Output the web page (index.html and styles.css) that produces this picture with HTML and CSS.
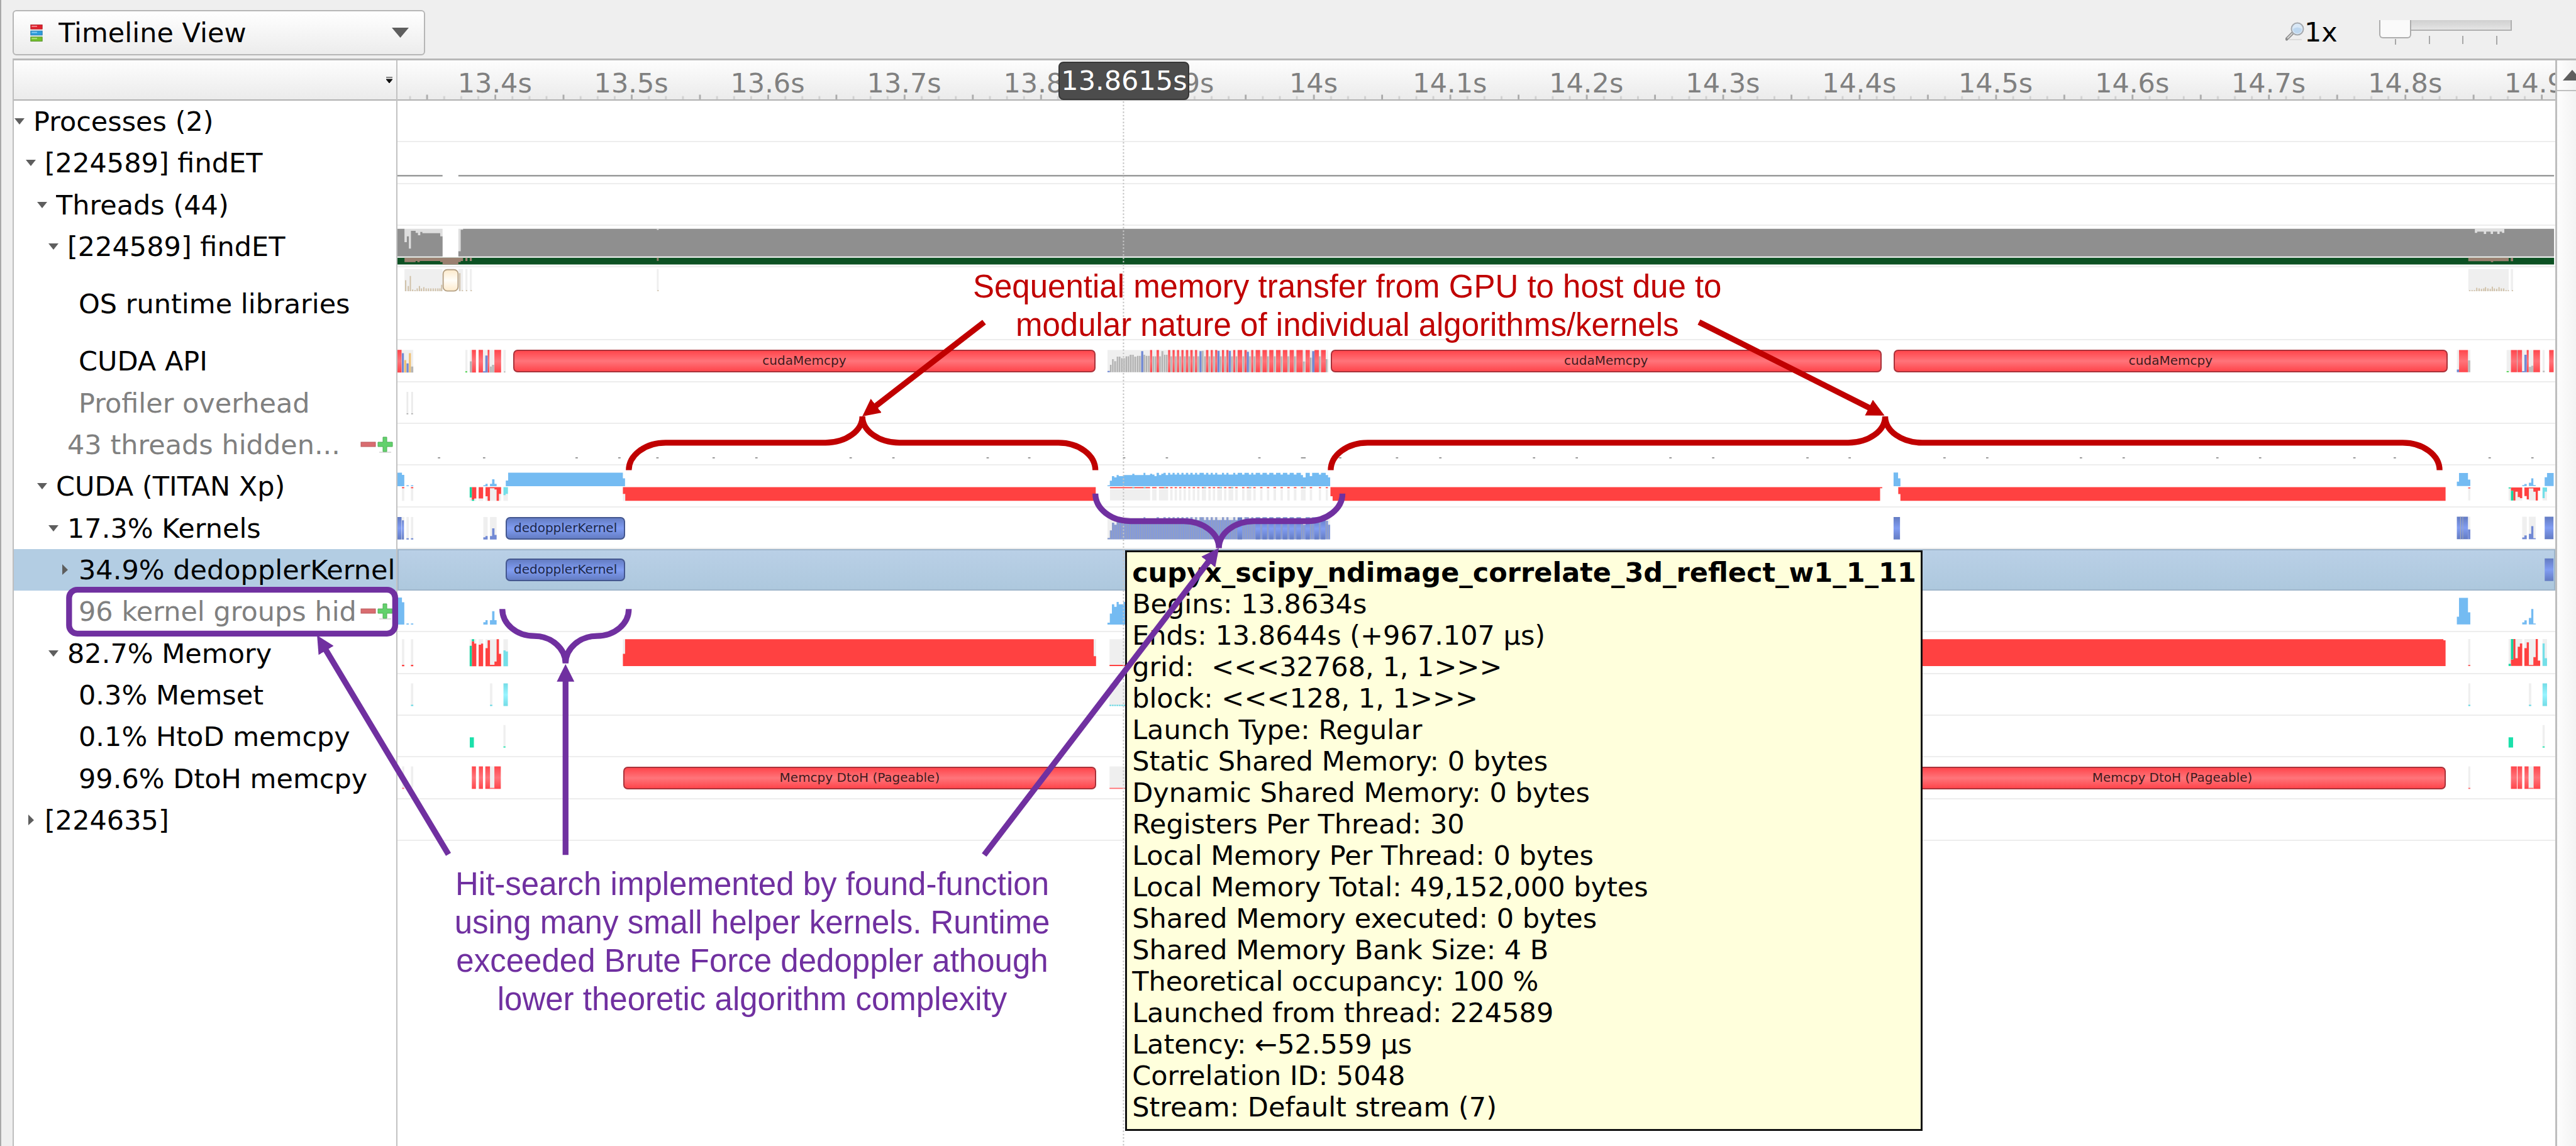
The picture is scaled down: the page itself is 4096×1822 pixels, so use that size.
FILE: index.html
```html
<!DOCTYPE html>
<html lang="en">
<head>
<meta charset="utf-8">
<title>Timeline View</title>
<link rel="stylesheet" href="styles.css">
</head>
<body>
<svg class="defs" width="0" height="0" aria-hidden="true">
  <defs>
    <symbol id="open" viewBox="0 0 16 10"><path d="M0 0H16L8 10z" fill="#5e5e5e"/></symbol>
    <symbol id="closed" viewBox="0 0 9 17"><path d="M0 0L9 9L0 17z" fill="#5e5e5e"/></symbol>
    <symbol id="minus" viewBox="0 0 25 26"><rect x="1" y="9" width="23" height="7" fill="#d96d70" stroke="#b9585b"/></symbol>
    <symbol id="plus" viewBox="0 0 25 26"><path d="M3 25H22" stroke="#dcdcdc" stroke-width="2"/><path d="M9 1H15V9H24V16H15V24H9V16H1V9H9z" fill="#62d16c" stroke="#4cae55"/></symbol>
    <linearGradient id="red" x2="0" y2="1"><stop offset="0" stop-color="#ff464c"/><stop offset=".5" stop-color="#ff747a"/><stop offset="1" stop-color="#ff464c"/></linearGradient>
    <linearGradient id="indigo" x2="0" y2="1"><stop offset="0" stop-color="#637bc2"/><stop offset=".5" stop-color="#819df2"/><stop offset="1" stop-color="#637bc2"/></linearGradient>
    <linearGradient id="cyan" x2="0" y2="1"><stop offset="0" stop-color="#74dce6"/><stop offset=".5" stop-color="#98f4ff"/><stop offset="1" stop-color="#74dce6"/></linearGradient>
    <linearGradient id="cream" x2="0" y2="1"><stop offset="0" stop-color="#fdeacb"/><stop offset=".5" stop-color="#fffdf8"/><stop offset="1" stop-color="#fdeacb"/></linearGradient>
    <pattern id="graybars" width="8.6" height="10" patternUnits="userSpaceOnUse"><rect width="9" height="10" fill="#d6d6d6"/><rect width="4" height="10" fill="#ababab"/></pattern>
    <pattern id="bluebars" width="8.6" height="10" patternUnits="userSpaceOnUse"><rect width="9" height="10" fill="#8299de"/><rect width="3" height="10" fill="#98a2b8"/></pattern>
    <pattern id="ticks" x="699" y="160" width="116.5" height="20" patternUnits="userSpaceOnUse"><path d="M1.500 6V12M59.800 6V12M88.900 6V12" stroke="#cfcfcf" stroke-width="3"/><path d="M30.600 3.500V12" stroke="#a8a8a8" stroke-width="3"/></pattern>
    <path id="burst" d="M317 100V93H326V59H334V25H343V34H352V16H360V25H378V16H412V7H420V16H455V0H462V16H480V7H488V13H497V25H505V0H514V16H523V7H531V0H540V16H549V0H557V13H566V0H574V13H583V0H591V13H600V0H608V13H617V0H626V13H634V0H643V13H652V0H660V13H669V0H686V13H694V0H703V13H712V0H720V13H729V0H737V13H755V0H763V13H772V0H780V13H798V0H806V13H815V0H832V13H841V0H858V13H867V0H875V13H884V0H901V13H910V0H927V13H936V0H952V13H962V0H979V13H988V0H1005V13H1014V0H1030V13H1040V0H1057V16H1065V34H1075V0H1091V25H1100V0H1126V13H1134V0H1152V16H1161V34H1169V100Z"/>
    <clipPath id="copies"><path d="M326 930H480V1010H326zM488 930H505V1010H488zM514 930H549V1010H514zM557 930H566V1010H557zM574 930H583V1010H574zM591 930H600V1010H591zM608 930H617V1010H608zM626 930H634V1010H626zM643 930H652V1010H643zM660 930H669V1010H660zM678 930H694V1010H678zM703 930H712V1010H703zM720 930H729V1010H720zM737 930H755V1010H737zM763 930H772V1010H763zM780 930H798V1010H780zM806 930H815V1010H806zM832 930H841V1010H832zM850 930H867V1010H850zM875 930H884V1010H875zM901 930H910V1010H901zM927 930H936V1010H927zM952 930H962V1010H952zM979 930H988V1010H979zM1005 930H1014V1010H1005zM1030 930H1040V1010H1030zM1057 930H1075V1010H1057zM1091 930H1100V1010H1091zM1126 930H1134V1010H1126zM1152 930H1161V1010H1152z"/></clipPath>
    <marker id="head-red" markerUnits="userSpaceOnUse" markerWidth="30" markerHeight="30" refX="2" refY="15" orient="auto"><path d="M0 0L30 15L0 30z" fill="#c00000"/></marker>
    <marker id="head-purple" markerUnits="userSpaceOnUse" markerWidth="30" markerHeight="30" refX="2" refY="15" orient="auto"><path d="M0 0L30 15L0 30z" fill="#7030a0"/></marker>
  </defs>
</svg>

<header class="toolbar">
  <div class="picker">
    <svg class="picker-icon" viewBox="0 0 20 28" aria-hidden="true">
      <rect x=".5" y=".5" width="19" height="7" fill="#e0202c" stroke="#b3252c"/><rect x="2" y="2" width="9" height="2" fill="#f38a90"/>
      <rect x=".5" y="10.500" width="19" height="7" fill="#2d9ddc" stroke="#2778ae"/><rect x="2" y="12" width="9" height="2" fill="#8accf2"/>
      <rect x=".5" y="20.500" width="19" height="7" fill="#74bf2c" stroke="#55912a"/><rect x="2" y="22" width="9" height="2" fill="#b2e27a"/>
    </svg>
    <select aria-label="View"><option>Timeline View</option></select>
    <svg class="picker-arrow" viewBox="0 0 16 10" preserveAspectRatio="none" aria-hidden="true"><path d="M0 0H16L8 10z" fill="#5e5e5e"/></svg>
  </div>
  <div class="zoom">
    <svg class="lens" viewBox="0 0 30 30" aria-hidden="true">
      <path d="M6 28H26" stroke="#dcdcdc" stroke-width="2"/>
      <path d="M2 27L11 18" stroke="#8c8c8c" stroke-width="5" stroke-linecap="round"/><path d="M3 26L11 18" stroke="#d6d6d6" stroke-width="2"/>
      <circle cx="19" cy="11" r="9.500" fill="#d9e8f6" stroke="#a5a9ae" stroke-width="2"/><path d="M12 11Q19 6 26 11A7 7 0 0 1 12 11" fill="#bdd7ef"/>
    </svg>
    <label for="zoom">1x</label>
    <div class="slider">
      <input id="zoom" type="range" min="1" max="10" value="1">
      <svg class="slider-ticks" viewBox="0 0 211 40" aria-hidden="true"><path d="M26 30V39M80 25V38M133 25V38M187 25V39" stroke="#a8a8a8" stroke-width="2"/></svg>
    </div>
  </div>
</header>

<main class="workspace">
  <section class="tree">
    <div class="tree-head"><button aria-label="Columns"><svg width="10" height="10" viewBox="0 0 10 10"><path d="M0 1H10M0 4L5 10L10 4z" fill="#111" stroke="#111"/></svg></button></div>
    <ul class="rows">
      <li class="l0"><button class="twisty" aria-label="Collapse"><svg class="open"><use href="#open"/></svg></button><span>Processes (2)</span></li>
      <li class="l1"><button class="twisty" aria-label="Collapse"><svg class="open"><use href="#open"/></svg></button><span>[224589] findET</span></li>
      <li class="l2"><button class="twisty" aria-label="Collapse"><svg class="open"><use href="#open"/></svg></button><span>Threads (44)</span></li>
      <li class="l3"><button class="twisty" aria-label="Collapse"><svg class="open"><use href="#open"/></svg></button><span>[224589] findET</span></li>
      <li class="l4"><i class="twisty"></i><span>OS runtime libraries</span></li>
      <li class="l4"><i class="twisty"></i><span>CUDA API</span></li>
      <li class="l4 muted"><i class="twisty"></i><span>Profiler overhead</span></li>
      <li class="l3 muted"><i class="twisty"></i><span>43 threads hidden...</span><button class="step" aria-label="Fewer"><svg><use href="#minus"/></svg></button><button class="step" aria-label="More"><svg><use href="#plus"/></svg></button></li>
      <li class="l2"><button class="twisty" aria-label="Collapse"><svg class="open"><use href="#open"/></svg></button><span>CUDA (TITAN Xp)</span></li>
      <li class="l3"><button class="twisty" aria-label="Collapse"><svg class="open"><use href="#open"/></svg></button><span>17.3% Kernels</span></li>
      <li class="l4 selected"><button class="twisty" aria-label="Expand"><svg class="closed"><use href="#closed"/></svg></button><span>34.9% dedopplerKernel</span></li>
      <li class="l4 muted"><i class="twisty"></i><span>96 kernel groups hid</span><button class="step" aria-label="Fewer"><svg><use href="#minus"/></svg></button><button class="step" aria-label="More"><svg><use href="#plus"/></svg></button></li>
      <li class="l3"><button class="twisty" aria-label="Collapse"><svg class="open"><use href="#open"/></svg></button><span>82.7% Memory</span></li>
      <li class="l4"><i class="twisty"></i><span>0.3% Memset</span></li>
      <li class="l4"><i class="twisty"></i><span>0.1% HtoD memcpy</span></li>
      <li class="l4"><i class="twisty"></i><span>99.6% DtoH memcpy</span></li>
      <li class="l1"><button class="twisty" aria-label="Expand"><svg class="closed"><use href="#closed"/></svg></button><span>[224635]</span></li>
    </ul>
  </section>

  <section class="timeline">
    <div class="ruler">
      <svg class="chart" viewBox="679 101 3685 71" preserveAspectRatio="none"><rect x="679" y="160" width="3685" height="12" fill="url(#ticks)"/></svg>
      <span style="left:4.600%">13.4s</span><span style="left:10.920%">13.5s</span><span style="left:17.240%">13.6s</span><span style="left:23.570%">13.7s</span><span style="left:29.890%">13.8s</span><span style="left:36.210%">13.9s</span><span style="left:42.540%">14s</span><span style="left:48.860%">14.1s</span><span style="left:55.180%">14.2s</span><span style="left:61.510%">14.3s</span><span style="left:67.830%">14.4s</span><span style="left:74.150%">14.5s</span><span style="left:80.480%">14.6s</span><span style="left:86.800%">14.7s</span><span style="left:93.130%">14.8s</span><span style="left:99.450%">14.9s</span>
    </div>
    <div class="rows">
      <div class="lane"></div>
      <div class="lane"><svg class="chart" viewBox="679 243.700 3685 71.300" preserveAspectRatio="none"><path d="M679 301H756M783 301H4362" stroke="#8f9090" stroke-width="2.500"/></svg></div>
      <div class="lane"></div>
      <div class="lane"><svg class="chart" viewBox="679 386 3685 71.300" preserveAspectRatio="none">
        <path d="M691 391H756V438H691zM783 391H791V438H783z" fill="#dedede"/>
        <path d="M679 391H691V414H695V404H698.500V425H702V394.500H710V398H714V402H718V396.500H721.500V398.500H752V404H756V438.500H679zM783 429.500H787V392.700H791V391H4362V438.500H783z" fill="#8f8f8f"/>
        <path d="M4226.700 391V398H4230.700V396H4242V400H4246V396H4253.700V400H4257.700V396H4265V400H4269V396H4273V398H4277V391zM1122 391H1125V393H1122z" fill="#dedede"/>
        <path d="M679 440.700H4362V452.200H679z" fill="#0c5123"/>
        <path d="M691 440.700H791V446.300H787V448H783V452.200H756V448H752V446.300H717V448H713V446.300H710V448H691zM795 440.700H798.500V446.300H795zM802.500 440.700H806V446.300H802.500zM1122 440.700H1125V446H1122zM4215.500 440.700H4284.500V446.500H4258V448H4254V446.500H4215.500zM4288 440.700H4292V446.500H4288z" fill="#9a8070"/>
      </svg></div>
      <div class="lane"><svg class="chart" viewBox="679 457 3685 125" preserveAspectRatio="none">
        <path d="M691 460H756V498H691zM783 460H791V498H783zM795 460H798.500V498H795zM802.500 460H806V498H802.500zM1122 460H1125V498H1122zM4215.500 460H4284.500V498H4215.500zM4288 460H4292V498H4288z" fill="#efefef"/>
        <path d="M693 498V479M697.500 498V489M701 498V471.700M705 498V495M709 498V496M712.700 498V493M716.500 498V489M720 498V493M724 498V491M728 498V493M732 498V493M736 498V493M740 498V493M744 498V493M748 498V493M751.500 498V493M754.500 498V487M785.500 498V467M790 498V496M797 498V496M805 498V496M1124 498V496M4218 498V496M4222 498V496M4226 498V496M4230 498V492M4234 498V493M4238 498V494M4242 498V493M4245 498V491M4249 498V493M4253 498V494M4256.500 498V490M4260 498V493M4264 498V494M4268 498V491M4272 498V493M4276 498V493M4280 498V496M4284 498V496M4291 498V496" stroke="#cfbfa5" stroke-width="2" fill="none"/>
        <rect x="757" y="461" width="25.500" height="36.500" rx="7" fill="url(#cream)" stroke="#b5a185" stroke-width="2"/>
      </svg></div>
      <div class="lane"><svg class="chart" viewBox="679 582 3685 71.300" preserveAspectRatio="none">
        <path d="M679 598.500H706V637H679zM795 598.500H798.500V637H795zM802.500 598.500H806V637H802.500zM825 598.500H844V637H825zM860 598.500H864V637H860z" fill="#efefef"/>
        <path d="M679 598.500H686V637H679zM806 598.500H813V637H806zM817.500 598.500H825V637H817.500zM833 598.500H836V637H833zM844.500 598.500H856V637H844.500z" fill="url(#red)"/>
        <path d="M686.500 604H690V637H686.500zM694.500 621.500H698V637H694.500zM829 608H833V637H829zM825 635H829V637H825z" fill="#7189d4"/>
        <path d="M690.500 616H694V637H690.500zM698.500 604H702V637H698.500z" fill="#f0c173"/>
        <path d="M702 627H706V637H702zM802.500 618H806V637H802.500zM837 627H840V637H837zM840.500 624H844V637H840.500zM861 635H863V637H861z" fill="#b5b5b5"/>
        <path d="M795 635H798V637H795z" fill="#3bd23b"/>
        <g transform="translate(1750 520) scale(.4464 .3333)">
          <path d="M317 236H1161V350H317z" fill="#efefef"/>
          <path d="M326 350V312H334V283H343V293H352V270H369V278H386V268H400V260H418V270H430V266H454V260H462V266H480V268H523V242H533V260H549V268H677V240H686V268H1064V295H1075V275H1109V268H1152V283H1161V350z" fill="url(#graybars)"/>
          <path d="M480 236h8v114h-8zM505 236h9v114h-9zM549 236h8v114h-8zM566 236h8v114h-8zM583 236h8v114h-8zM600 236h8v114h-8zM617 236h9v114h-9zM634 236h9v114h-9zM652 236h8v114h-8zM694 236h9v114h-9zM712 236h8v114h-8zM729 236h8v114h-8zM755 236h8v114h-8zM772 236h8v114h-8zM798 236h8v114h-8zM815 236h17v114h-17zM841 236h9v114h-9zM867 236h8v114h-8zM884 236h17v114h-17zM910 236h17v114h-17zM936 236h16v114h-16zM962 236h17v114h-17zM988 236h17v114h-17zM1014 236h16v114h-16zM1040 236h24v114h-24zM1075 236h16v114h-16zM1109 236h17v114h-17zM1134 236h18v114h-18z" fill="url(#red)"/>
          <path d="M446 242h8v108h-8zM669 242h8v108h-8zM738 240h8v110h-8zM781 240h8v110h-8zM850 245h8v105h-8zM1100 242h9v108h-9zM317 343h9v7h-9z" fill="#7189d4"/>
        </g>
        <g transform="translate(3900 520) scale(.3333 .574)">
          <path d="M888 137H899V203H888zM945 137H957V203H945zM1143 137H1165V203H1143zM1222 137H1280V203H1222zM1327 137H1338V203H1327z" fill="#efefef"/>
          <path d="M945 168H957V203H945zM1196 137H1199V203H1196zM1257 187H1269V203H1257zM1269 184H1280V203H1269zM1328 199H1338V203H1328z" fill="#bcbcbc"/>
          <path d="M899 137H945V203H899zM1165 137H1196V203H1165zM1199 137H1222V203H1199zM1246 137H1256V203H1246zM1280 137H1314V203H1280zM1361 137H1384V203H1361z" fill="url(#red)"/>
          <path d="M888 195H899V203H888zM1222 200H1234V203H1222zM1234 151H1246V203H1234z" fill="#7189d4"/><path d="M1143 200H1154V203H1143z" fill="#3bd23b"/>
        </g>
      </svg>
        <div class="bar red" style="left:5.350%;width:27.010%">cudaMemcpy</div><div class="bar red" style="left:43.240%;width:25.540%">cudaMemcpy</div><div class="bar red" style="left:69.330%;width:25.690%">cudaMemcpy</div>
      </div>
      <div class="lane"><svg class="chart" viewBox="679 653.300 3685 71.300" preserveAspectRatio="none"><path d="M696 669.500V706M704 669.500V706" stroke="#ebebeb" stroke-width="3"/><path d="M696 706V708M704 706V708" stroke="#b0b0b0" stroke-width="3"/></svg></div>
      <div class="lane"><svg class="chart" viewBox="679 724.600 3685 71.300" preserveAspectRatio="none"><path d="M748 782.500h4M825 782.500h4M983 782.500h4M1056 782.500h4M1121 782.500h4M1217 782.500h4M1290 782.500h4M1451 782.500h4M1524 782.500h4M1685 782.500h4M1756 782.500h4M1918 782.500h4M1991 782.500h4M2149 782.500h4M2222 782.500h8M2287 782.500h4M2384 782.500h4M2458 782.500h4M2618 782.500h4M2691 782.500h4M2851 782.500h4M2924 782.500h4M3085 782.500h4M3157 782.500h4M3319 782.500h4M3392 782.500h4M3552 782.500h4M3625 782.500h4M3785 782.500h4M3858 782.500h4M4019 782.500h4M4088 782.500h4M4250 782.500h4M4323 782.500h4" stroke="#8c8c8c" stroke-width="2"/></svg></div>
      <div class="lane"><svg class="chart" viewBox="679 795.900 3685 71.300" preserveAspectRatio="none">
        <g transform="translate(660 780) scale(.3333)">
          <path d="M80 165H92V229H80zM126 165H138V229H126zM427 212H461V229H427zM473 217H496V229H473zM508 159H588V229H508zM600 194H623V229H600zM1212 159H1223V229H1212z" fill="#efefef"/>
          <path d="M57 85H80V96H92V154H57zM103 149H115V154H103zM126 149H138V154H126zM497 149H508V142H519V154H497zM531 142H542V119H554V142H565V154H531zM624 85H1212V114H1223V154H612V125H624z" fill="#74bbf2"/>
          <path d="M80 159H92V165H80zM126 159H138V165H126zM438 159H461V217H450V223H438zM473 159H496V217H473zM508 159H588V194H577V229H565V171H554V165H531V229H519V206H508z" fill="#ff4141"/>
          <path d="M427 159H438V212H427zM438 223H450V229H438z" fill="#14d5a0"/><path d="M600 159H623V194H611V200H600z" fill="#74dfe8"/>
        </g>
        <path d="M1064 833H1871.500V856.500H1068V844.500H1064zM2272.300 833H3214.700V835H3211V856.500H2276V848.700H2272.300zM3242 833H4176.700V856.500H3245.700V844.700H3242z" fill="#ff4141"/>
        <path d="M3234 808H3241.700V818H3245.700V831.300H3234z" fill="#74bbf2"/>
        <g transform="translate(1750 520) scale(.4464 .3333)">
          <use href="#burst" transform="translate(0 866) scale(1 .68)" fill="#74bbf2"/>
          <g clip-path="url(#copies)"><path d="M317 950H1169V1008H317z" fill="#efefef"/><path d="M317 939H1169V945H317z" fill="#ff4141"/><path d="M412 939h8v6h-8zM455 939h8v6h-8zM533 939h8v6h-8zM686 939h8v6h-8zM746 939h8v6h-8zM790 939h8v6h-8zM858 939h8v6h-8zM1065 939h8v6h-8z" fill="#64e4f0"/></g>
        </g>
        <g transform="translate(3900 520) scale(.3333 .574)">
          <path d="M946 549H957V585H946zM1153 549H1165V585H1153zM1188 559H1223V585H1188zM1257 549H1292V585H1257zM1327 559H1350V585H1327z" fill="#efefef"/>
          <path d="M888 542V529H899V503H945V523H957V542zM1223 542V539H1234V536H1246V542zM1257 542V532H1269V519H1280V539H1292V542zM1338 542V516H1350V503H1384V542z" fill="#74bbf2"/>
          <path d="M946 546H957V549H946zM1165 546H1223V578H1211V575H1200V559H1188V585H1177V556H1165zM1234 546H1315V556H1303V585H1292V559H1280V549H1257V582H1246V572H1234z" fill="#ff4141"/>
          <path d="M1153 546H1165V549H1153zM1165 556H1177V585H1165z" fill="#14d5a0"/><path d="M1327 546H1350V559H1338V578H1327z" fill="#74dfe8"/>
        </g>
      </svg></div>
      <div class="lane"><svg class="chart" viewBox="679 867.200 3685 71.300" preserveAspectRatio="none">
        <g transform="translate(660 780) scale(.3333)">
          <path d="M80 310H92V425H80zM103 310H115V425H103zM126 310H138V425H126zM497 310H519V425H497zM531 310H565V425H531z" fill="#efefef"/>
          <path d="M57 310H78V425H57zM80 327H90V425H80z" fill="url(#indigo)"/>
          <path d="M103 419H115V425H103zM126 419H138V425H126zM497 414H508V408H519V425H497zM531 408H542V368H554V402H565V425H531z" fill="#7189d4"/>
        </g>
        <g transform="translate(1750 520) scale(.4464 .3333)"><path d="M317 1091H1169V1205H317z" fill="#efefef"/><use href="#burst" transform="translate(0 1091) scale(1 1.140)" fill="url(#bluebars)"/><path d="M815 1095H832V1205H815zM884 1095H901V1205H884zM910 1095H927V1205H910zM936 1095H952V1205H936zM962 1095H979V1205H962zM988 1095H1005V1205H988zM1014 1095H1030V1205H1014zM1040 1095H1057V1205H1040zM1075 1095H1091V1205H1075zM1109 1095H1126V1205H1109zM1134 1095H1150V1205H1134z" fill="url(#indigo)"/></g>
        <path d="M3234 883.300H3245V921.700H3234z" fill="url(#indigo)"/>
        <g transform="translate(3900 520) scale(.3333 .574)">
          <path d="M945 632H957V699H945zM1223 632H1246V699H1223zM1257 632H1292V699H1257z" fill="#efefef"/>
          <path d="M888 632H945V699H888zM1338 632H1383V699H1338z" fill="url(#indigo)"/><path d="M905 632H909V699H905zM917 632H920V699H917z" fill="#a3a8b6"/>
          <path d="M945 670H957V699H945zM1223 694H1234V688H1246V699H1223zM1257 683H1269V660H1280V696H1292V699H1257z" fill="#7189d4"/>
        </g>
      </svg>
        <div class="bar blue" style="left:5.020%;width:5.530%">dedopplerKernel</div>
      </div>
      <div class="lane selected"><svg class="chart" viewBox="679 938.500 3685 71.300" preserveAspectRatio="none"><path d="M4346 954.500H4361V993H4346z" fill="url(#indigo)"/></svg>
        <div class="bar blue" style="left:5.020%;width:5.530%">dedopplerKernel</div>
      </div>
      <div class="lane"><svg class="chart" viewBox="679 1009.800 3685 71.300" preserveAspectRatio="none">
        <g transform="translate(660 780) scale(.3333)" fill="#74bbf2"><path d="M57 725H80V749H92V864H57zM103 858H115V864H103zM126 858H138V864H126zM497 864V852H508V841H519V864zM531 864V841H542V795H554V841H565V864z"/></g>
        <g transform="translate(1750 1021.700) scale(.4464 .463)" fill="#74bbf2"><use href="#burst"/></g>
        <g transform="translate(3900 520) scale(.3333 .574)" fill="#74bbf2"><path d="M888 954V931H899V875H945V918H957V954zM1223 954V948H1234V942H1246V954zM1257 954V935H1269V908H1280V951H1292V954z"/></g>
      </svg></div>
      <div class="lane"><svg class="chart" viewBox="679 1081 3685 71.300" preserveAspectRatio="none">
        <g transform="translate(660 780) scale(.3333)">
          <path d="M80 939H92V1078H80zM126 939H138V1078H126zM427 939H461V1078H427zM473 939H496V1078H473zM508 939H577V1078H508zM600 939H623V1078H600zM1212 939H1223V1078H1212z" fill="#efefef"/>
          <path d="M80 1071H92V1078H80zM126 1071H138V1078H126zM438 950H450V962H461V1078H438zM473 968H485V962H496V1078H473zM508 985H519V945H531V1071H554V1054H565V939H577V1014H588V1078H508z" fill="#ff4141"/>
          <path d="M427 973H438V1078H427zM438 939H450V950H438z" fill="#14d5a0"/><path d="M600 997H611V1002H623V1078H600z" fill="#74dfe8"/>
        </g>
        <path d="M1868 1093H1872V1139H1868zM1895 1093H2268V1139H1895z" fill="#efefef"/>
        <path d="M1064 1118H1067.700V1093H1868V1122H1872V1139H1064zM1895 1137H2268V1139H1895zM3242 1093H4173V1095H4176.700V1139H3242z" fill="#ff4141"/>
        <g transform="translate(3900 520) scale(.3333 .574)">
          <path d="M946 998H957V1078H946zM1153 998H1165V1078H1153zM1188 998H1223V1078H1188zM1234 998H1303V1078H1234zM1327 998H1350V1078H1327z" fill="#efefef"/>
          <path d="M946 1075H957V1078H946zM1165 1059H1177V998H1188V1055H1200V1021H1211V1011H1223V1078H1165zM1234 1025H1246V1008H1257V1075H1280V1052H1292V998H1303V1062H1315V1078H1234z" fill="#ff4141"/>
          <path d="M1153 1072H1165V1078H1153zM1165 998H1177V1059H1165z" fill="#14d5a0"/><path d="M1327 1011H1338V1055H1350V1078H1327z" fill="#74dfe8"/>
        </g>
      </svg></div>
      <div class="lane"><svg class="chart" viewBox="679 1152.300 3685 71.300" preserveAspectRatio="none">
        <path d="M702 1168H706V1206H702zM837 1168H841V1206H837zM1895 1168H2268V1206H1895zM4215.500 1168H4219V1206H4215.500zM4319 1168H4323V1206H4319z" fill="#efefef"/>
        <path d="M702 1205.500H706M837 1205.500H841M4215.500 1205.500H4219M4319 1205.500H4323" stroke="#64d8e4" stroke-width="2"/><path d="M1895 1205.500H1922" stroke="#64d8e4" stroke-width="2" stroke-dasharray="3 1"/>
        <path d="M860 1168H867.500V1206.500H860zM4342.300 1168H4350V1206.500H4342.300z" fill="url(#cyan)"/>
      </svg></div>
      <div class="lane"><svg class="chart" viewBox="679 1223.600 3685 71.300" preserveAspectRatio="none">
        <path d="M860 1239.500H863.500V1276H860zM4342.300 1239.500H4346V1276H4342.300z" fill="#efefef"/>
        <path d="M802.500 1260.500H809.500V1278H802.500zM4284.300 1260.500H4292V1278H4284.300zM860 1276H863.500V1278H860zM4342.300 1276H4346V1278H4342.300z" fill="#1be0aa"/>
      </svg></div>
      <div class="lane"><svg class="chart" viewBox="679 1294.900 3685 71.300" preserveAspectRatio="none">
        <path d="M687 1310.500H690.500V1347H687zM702 1310.500H706V1347H702zM836 1310.500H845V1347H836zM1895 1310.500H2268V1347H1895zM4215.500 1310.500H4219V1347H4215.500zM4319 1310.500H4327V1347H4319z" fill="#efefef"/>
        <path d="M806 1310.500H813V1349H806zM818 1310.500H825V1349H818zM829 1310.500H837V1349H829zM844.500 1310.500H855.500V1349H844.500zM4288.300 1310.500H4298.500V1349H4288.300zM4299.500 1310.500H4307.500V1349H4299.500zM4311.500 1310.500H4318.500V1349H4311.500zM4327 1310.500H4338.500V1349H4327z" fill="url(#red)"/>
        <path d="M687 1348H690.500M836 1348H845M1895 1348H1922M4215.500 1348H4219M4318 1348H4327" stroke="#ff6a6e" stroke-width="2"/>
      </svg>
        <div class="bar red" style="left:10.470%;width:21.900%">Memcpy DtoH (Pageable)</div><div class="bar red" style="left:69.580%;width:25.340%">Memcpy DtoH (Pageable)</div>
      </div>
      <div class="lane"></div>
    </div>
  </section>

  <aside class="scrollbar"><button aria-label="Scroll up"><svg width="30" height="17" viewBox="0 0 30 17"><path d="M0 17L15 0L30 17z" fill="#5e5e5e"/></svg></button></aside>
</main>

<div class="overlay">
  <svg class="layer" viewBox="0 0 4400 1957" preserveAspectRatio="none"><path d="M1919 173V1957" stroke="#c4c4c4" stroke-width="2.200" stroke-dasharray="2.600 3.200"/></svg>
  <div class="cursor-time">13.8615s</div>
  <div class="tooltip">
    <strong>cupyx_scipy_ndimage_correlate_3d_reflect_w1_1_11</strong>
    <p>Begins: 13.8634s</p>
    <p>Ends: 13.8644s (+967.107 µs)</p>
    <p>grid: &nbsp;&lt;&lt;&lt;32768, 1, 1&gt;&gt;&gt;</p>
    <p>block: &lt;&lt;&lt;128, 1, 1&gt;&gt;&gt;</p>
    <p>Launch Type: Regular</p>
    <p>Static Shared Memory: 0 bytes</p>
    <p>Dynamic Shared Memory: 0 bytes</p>
    <p>Registers Per Thread: 30</p>
    <p>Local Memory Per Thread: 0 bytes</p>
    <p>Local Memory Total: 49,152,000 bytes</p>
    <p>Shared Memory executed: 0 bytes</p>
    <p>Shared Memory Bank Size: 4 B</p>
    <p>Theoretical occupancy: 100 %</p>
    <p>Launched from thread: 224589</p>
    <p>Latency: ←52.559 µs</p>
    <p>Correlation ID: 5048</p>
    <p>Stream: Default stream (7)</p>
  </div>
  <svg class="layer" viewBox="0 0 4400 1957" preserveAspectRatio="none" fill="none" stroke-width="10">
    <g stroke="#c00000">
      <path d="M1074 803A63 47 0 0 1 1137 756H1410A63 45 0 0 0 1473 711A63 45 0 0 0 1536 756H1808A63 47 0 0 1 1871 803"/>
      <path d="M2273 803A63 47 0 0 1 2336 756H3157A63 45 0 0 0 3220 711A63 45 0 0 0 3283 756H4104A63 47 0 0 1 4167 803"/>
      <path d="M1681 550L1495 694" marker-end="url(#head-red)"/>
      <path d="M2902 550L3194 697" marker-end="url(#head-red)"/>
    </g>
    <g stroke="#7030a0">
      <rect x="118" y="1007" width="557" height="75" rx="14"/>
      <path d="M858 1040A54 46 0 0 0 912 1086A54 47 0 0 1 966 1133A54 47 0 0 1 1020 1086A54 46 0 0 0 1074 1040"/>
      <path d="M1871 843A60 47 0 0 0 1931 890H2022A60 46 0 0 1 2082 936A60 46 0 0 1 2142 890H2233A60 47 0 0 0 2293 843"/>
      <path d="M766 1459L556 1109" marker-end="url(#head-purple)"/>
      <path d="M966 1460V1162" marker-end="url(#head-purple)"/>
      <path d="M1681 1460L2065 958" marker-end="url(#head-purple)"/>
    </g>
  </svg>
  <p class="note transfer">Sequential memory transfer from GPU to host due to<br>modular nature of individual algorithms/kernels</p>
  <p class="note search">Hit-search implemented by found-function<br>using many small helper kernels. Runtime<br>exceeded Brute Force dedoppler athough<br>lower theoretic algorithm complexity</p>
</div>
</body>
</html>
```
FILE: styles.css
```css
* { box-sizing: border-box; }

body {
  position: relative;
  display: flex;
  flex-direction: column;
  min-height: 100vh;
  margin: 0;
  padding-left: 20px;
  overflow: hidden;
  background: #efefef;
  box-shadow: inset 2px 0 #a9a9a9;
  color: #000;
  font: 43px/50px "DejaVu Sans", sans-serif;
}

button {
  display: flex;
  align-items: center;
  justify-content: center;
  padding: 0;
  border: 0;
  background: none;
}

.defs { position: absolute; }

/* Toolbar */
.toolbar {
  display: flex;
  align-items: flex-start;
  justify-content: space-between;
  height: 93px;
  padding: 16px 102px 0 0;
}

.picker {
  display: flex;
  align-items: center;
  width: 656px;
  height: 72px;
  padding: 0 24px 0 26px;
  border: 2px solid #b6b6b6;
  border-radius: 6px;
  background: linear-gradient(#fff, #ececec);
}

.picker-icon { width: 20px; height: 27px; }
.picker-arrow { width: 27px; height: 16px; }

.picker select {
  flex: 1;
  appearance: none;
  padding: 0 0 0 25px;
  border: 0;
  background: none;
  color: inherit;
  font: inherit;
}

.zoom { display: flex; align-items: flex-start; }
.zoom label { width: 119px; margin-top: 10px; }
.lens { width: 30px; height: 30px; margin-top: 19px; }

.slider {
  display: grid;
  width: 211px;
  height: 56px;
  padding-top: 16px;
}

.slider > * { grid-area: 1 / 1; }

.slider input {
  appearance: none;
  width: 211px;
  height: 29px;
  margin: 0;
  background: none;
}

.slider input::-webkit-slider-runnable-track {
  height: 29px;
  background: linear-gradient(#b0b0b0, #b0b0b0) 0 15px / 100% 2px no-repeat,
    linear-gradient(#b0b0b0, #b0b0b0) 100% 0 / 2px 16px no-repeat,
    linear-gradient(#d0d0d0, #e6e6e6) 0 0 / 100% 16px no-repeat;
}

.slider input::-webkit-slider-thumb {
  appearance: none;
  width: 51px;
  height: 29px;
  border: 2px solid #adadad;
  border-top: 0;
  border-radius: 0 0 6px 6px;
  background: #fafafa;
}

.slider-ticks { width: 211px; height: 40px; pointer-events: none; }

/* Workspace */
.workspace {
  flex: 1;
  display: grid;
  grid-template-columns: 610px 1fr 33px;
  border-top: 3px solid #b8b8b8;
  border-left: 2px solid #bebebe;
  background: #fff;
}

.rows {
  display: grid;
  grid-template-rows: repeat(4, 4fr) 7fr repeat(12, 4fr);
  height: 1177px;
  margin: 0;
  padding: 0;
  list-style: none;
}

.tree { min-width: 0; border-right: 2px solid #c2c2c2; }

.tree-head,
.ruler {
  height: 64px;
  border-bottom: 2px solid #b0b0b0;
  background: linear-gradient(#fdfdfd, #ebebeb);
}

.tree-head {
  display: flex;
  align-items: center;
  justify-content: flex-end;
  padding-right: 6px;
}

.tree li {
  display: flex;
  align-items: center;
  min-width: 0;
  padding-right: 4px;
  white-space: nowrap;
}

.tree li span { flex: 1; min-width: 0; overflow: hidden; }

.twisty { flex: none; width: 18px; height: 24px; margin-right: 13px; }
.open { width: 16px; height: 10px; }
.closed { width: 9px; height: 17px; }

.l1 .twisty { margin-left: 18px; }
.l2 .twisty { margin-left: 36px; }
.l3 .twisty { margin-left: 54px; }
.l4 .twisty { margin-left: 72px; }

.step { flex: none; width: 27px; height: 26px; }
.step svg { width: 25px; height: 26px; }

.muted { color: #808080; }
.tree .selected { background: #b3cde3; }

/* Timeline */
.timeline { min-width: 0; overflow: hidden; }

.ruler { position: relative; color: #808080; }

.ruler span {
  position: absolute;
  top: 11px;
  margin-left: -3px;
  transform: translateX(-50%);
}

.chart {
  display: block;
  width: 100%;
  height: 100%;
}

.lane {
  position: relative;
  min-height: 0;
  box-shadow: inset 0 -2px #ededed;
}

.lane .chart { position: absolute; inset: 0; }

.timeline .selected {
  background: linear-gradient(#bad0e7, #adc8dd);
  box-shadow: inset 0 0 0 2px #9fb6cb;
}

.bar {
  position: absolute;
  top: 15px;
  height: 36px;
  border: 2px solid;
  border-radius: 7px;
  font-size: 20px;
  line-height: 31px;
  text-align: center;
  white-space: nowrap;
}

.red {
  border-color: #a8323a;
  background: linear-gradient(#ff464c, #ff747a 50%, #ff464c);
  color: #401a1c;
}

.blue {
  border-color: #44578f;
  background: linear-gradient(#647dc4, #819df2 50%, #647dc4);
  color: #1c2747;
}

.scrollbar {
  overflow: hidden;
  border-left: 3px solid #bebebe;
  background: linear-gradient(90deg, #fdfdfd, #f3f3f3);
}

.scrollbar button {
  justify-content: flex-start;
  width: 100%;
  height: 49px;
  padding-left: 9px;
  border-bottom: 2px solid #c0c0c0;
}

.scrollbar button svg { flex: none; }

/* Cursor, tooltip and annotations over the timeline */
.overlay { position: absolute; inset: 0; pointer-events: none; }

.layer {
  position: absolute;
  inset: 0;
  width: 100%;
  height: 100%;
}

.cursor-time {
  position: absolute;
  top: 98px;
  left: 41.1%;
  width: 208px;
  height: 61px;
  border: 2px solid #373737;
  border-radius: 8px;
  background: #4c4c4c;
  color: #fff;
  line-height: 57px;
  text-align: center;
}

.tooltip {
  position: absolute;
  top: 875px;
  left: 43.68%;
  width: 1268px;
  padding: 7px 8px 10px;
  border: 3px solid #111;
  background: #ffffdc;
  white-space: nowrap;
}

.tooltip strong { display: block; }
.tooltip p { margin: 0; }

.note {
  position: absolute;
  margin: 0;
  transform: translateX(-50%);
  font: 51px/61px "Liberation Sans", Arial, sans-serif;
  text-align: center;
  white-space: nowrap;
}

.transfer { top: 425px; left: 52.3%; color: #c00000; }
.search { top: 1375px; left: 29.2%; color: #7030a0; }
```
